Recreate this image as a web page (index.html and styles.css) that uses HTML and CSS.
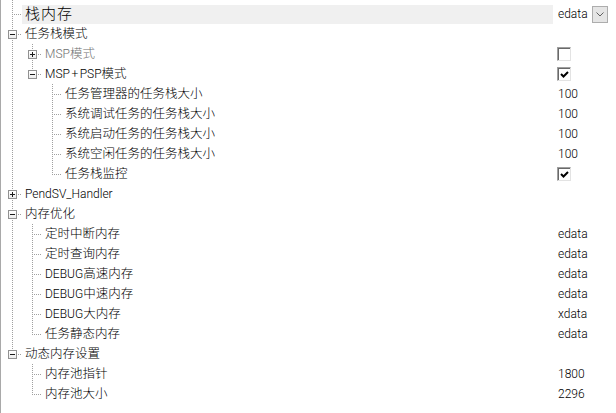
FILE: index.html
```html
<!DOCTYPE html>
<html lang="zh-CN">
<head>
<meta charset="utf-8">
<title>属性</title>
<link rel="stylesheet" href="styles.css">
</head>
<body>
<div class="tree">
  <div class="lead"></div>

  <div class="row">
    <span class="cell tee"></span>
    <span class="label sel big">栈内存</span>
    <span class="value">edata<span class="drop"><svg width="8" height="5" viewBox="0 0 8 5"><polyline points="0.5,0.5 4,4 7.5,0.5" fill="none" stroke="#606060" stroke-width="1"/></svg></span></span>
  </div>

  <div class="row">
    <span class="cell tee"><span class="box minus"></span></span>
    <span class="label">任务栈模式</span>
    <span class="value"></span>
  </div>

  <div class="row">
    <span class="cell vline"></span>
    <span class="cell tee"><span class="box plus"></span></span>
    <span class="label dim"><span class="en">MSP</span>模式</span>
    <span class="value"><span class="chk"></span></span>
  </div>

  <div class="row">
    <span class="cell vline"></span>
    <span class="cell elbow"><span class="box minus"></span></span>
    <span class="label"><span class="en">MSP<span class="plusch">+</span>PSP</span>模式</span>
    <span class="value"><span class="chk"><svg width="9" height="7" viewBox="0 0 9 7"><polyline points="1,3 3.5,5.5 8,1" fill="none" stroke="#000" stroke-width="2"/></svg></span></span>
  </div>

  <div class="row">
    <span class="cell vline"></span>
    <span class="cell"></span>
    <span class="cell tee"></span>
    <span class="label">任务管理器的任务栈大小</span>
    <span class="value">100</span>
  </div>

  <div class="row">
    <span class="cell vline"></span>
    <span class="cell"></span>
    <span class="cell tee"></span>
    <span class="label">系统调试任务的任务栈大小</span>
    <span class="value">100</span>
  </div>

  <div class="row">
    <span class="cell vline"></span>
    <span class="cell"></span>
    <span class="cell tee"></span>
    <span class="label">系统启动任务的任务栈大小</span>
    <span class="value">100</span>
  </div>

  <div class="row">
    <span class="cell vline"></span>
    <span class="cell"></span>
    <span class="cell tee"></span>
    <span class="label">系统空闲任务的任务栈大小</span>
    <span class="value">100</span>
  </div>

  <div class="row">
    <span class="cell vline"></span>
    <span class="cell"></span>
    <span class="cell elbow"></span>
    <span class="label">任务栈监控</span>
    <span class="value"><span class="chk"><svg width="9" height="7" viewBox="0 0 9 7"><polyline points="1,3 3.5,5.5 8,1" fill="none" stroke="#000" stroke-width="2"/></svg></span></span>
  </div>

  <div class="row">
    <span class="cell tee"><span class="box plus"></span></span>
    <span class="label"><span class="en">PendSV_Handler</span></span>
    <span class="value"></span>
  </div>

  <div class="row">
    <span class="cell tee"><span class="box minus"></span></span>
    <span class="label">内存优化</span>
    <span class="value"></span>
  </div>

  <div class="row">
    <span class="cell vline"></span>
    <span class="cell tee"></span>
    <span class="label">定时中断内存</span>
    <span class="value">edata</span>
  </div>

  <div class="row">
    <span class="cell vline"></span>
    <span class="cell tee"></span>
    <span class="label">定时查询内存</span>
    <span class="value">edata</span>
  </div>

  <div class="row">
    <span class="cell vline"></span>
    <span class="cell tee"></span>
    <span class="label"><span class="en">DEBUG</span>高速内存</span>
    <span class="value">edata</span>
  </div>

  <div class="row">
    <span class="cell vline"></span>
    <span class="cell tee"></span>
    <span class="label"><span class="en">DEBUG</span>中速内存</span>
    <span class="value">edata</span>
  </div>

  <div class="row">
    <span class="cell vline"></span>
    <span class="cell tee"></span>
    <span class="label"><span class="en">DEBUG</span>大内存</span>
    <span class="value">xdata</span>
  </div>

  <div class="row">
    <span class="cell vline"></span>
    <span class="cell elbow"></span>
    <span class="label">任务静态内存</span>
    <span class="value">edata</span>
  </div>

  <div class="row">
    <span class="cell elbow"><span class="box minus"></span></span>
    <span class="label">动态内存设置</span>
    <span class="value"></span>
  </div>

  <div class="row">
    <span class="cell"></span>
    <span class="cell tee"></span>
    <span class="label">内存池指针</span>
    <span class="value">1800</span>
  </div>

  <div class="row">
    <span class="cell"></span>
    <span class="cell elbow"></span>
    <span class="label">内存池大小</span>
    <span class="value">2296</span>
  </div>
</div>
</body>
</html>
```

FILE: styles.css
```css
html, body {
  margin: 0;
  padding: 0;
  background: #ffffff;
}

.tree {
  box-sizing: border-box;
  width: 616px;
  min-height: 413px;
  border-left: 1px solid #a9a9a9;
  padding: 4px 0 0 1px;
  font-family: Roboto, "Noto Sans CJK SC", sans-serif;
  font-size: 12.5px;
  font-weight: 300;
  color: #000;
}

.en {
  font-size: 12px;
  font-weight: 300;
}

.plusch {
  padding: 0 1.5px;
}

.lead {
  height: 0;
  width: 20px;
  position: relative;
}
.lead::before {
  content: "";
  position: absolute;
  left: 10px;
  top: -4px;
  width: 1px;
  height: 4px;
  background: repeating-linear-gradient(to bottom, #a0a0a0 0 1px, transparent 1px 2px);
}

.row {
  display: flex;
  height: 20px;
  line-height: 20px;
}

.cell {
  flex: none;
  width: 20px;
  height: 20px;
  position: relative;
}

.vline {
  background: repeating-linear-gradient(to bottom, #a0a0a0 0 1px, transparent 1px 2px) 10px 0 / 1px 20px no-repeat;
}

.tee {
  background:
    repeating-linear-gradient(to bottom, #a0a0a0 0 1px, transparent 1px 2px) 10px 0 / 1px 20px no-repeat,
    repeating-linear-gradient(to right, #a0a0a0 0 1px, transparent 1px 2px) 10px 10px / 11px 1px no-repeat;
}

.elbow {
  background:
    repeating-linear-gradient(to bottom, #a0a0a0 0 1px, transparent 1px 2px) 10px 0 / 1px 11px no-repeat,
    repeating-linear-gradient(to right, #a0a0a0 0 1px, transparent 1px 2px) 10px 10px / 11px 1px no-repeat;
}

.box {
  position: absolute;
  left: 6px;
  top: 6px;
  width: 7px;
  height: 7px;
  border: 1px solid #919191;
  background: linear-gradient(#ffffff, #ececec);
}
.box::before {
  content: "";
  position: absolute;
  left: 1px;
  top: 3px;
  width: 5px;
  height: 1px;
  background: #1a1a1a;
}
.plus::after {
  content: "";
  position: absolute;
  left: 3px;
  top: 1px;
  width: 1px;
  height: 5px;
  background: #1a1a1a;
}

.label {
  flex: 1;
  padding-left: 3px;
  white-space: nowrap;
}

.sel {
  background: linear-gradient(#f0f0f0, #f0f0f0) 0 1px / 100% 19px no-repeat;
}

.big {
  font-size: 15px;
  letter-spacing: 1px;
}

.dim {
  color: #707070;
}

.value {
  flex: none;
  width: 58px;
  padding-left: 5px;
  display: flex;
  align-items: center;
  position: relative;
  font-size: 12px;
  font-weight: 300;
}

.drop {
  position: absolute;
  left: 39px;
  top: 2px;
  box-sizing: border-box;
  width: 16px;
  height: 17px;
  border: 1px solid #adadad;
  background: #e5e5e5;
  display: flex;
  align-items: center;
  justify-content: center;
}

.chk {
  box-sizing: border-box;
  width: 14px;
  height: 14px;
  margin-left: -1px;
  background: #fff;
  border-top: 1px solid #a0a0a0;
  border-left: 1px solid #a0a0a0;
  border-right: 1px solid #e3e3e3;
  border-bottom: 1px solid #e3e3e3;
  box-shadow: inset 1px 1px 0 #696969;
  display: flex;
  align-items: center;
  justify-content: center;
}
.chk svg {
  display: block;
  margin: 1px 0 0 1px;
}
```
